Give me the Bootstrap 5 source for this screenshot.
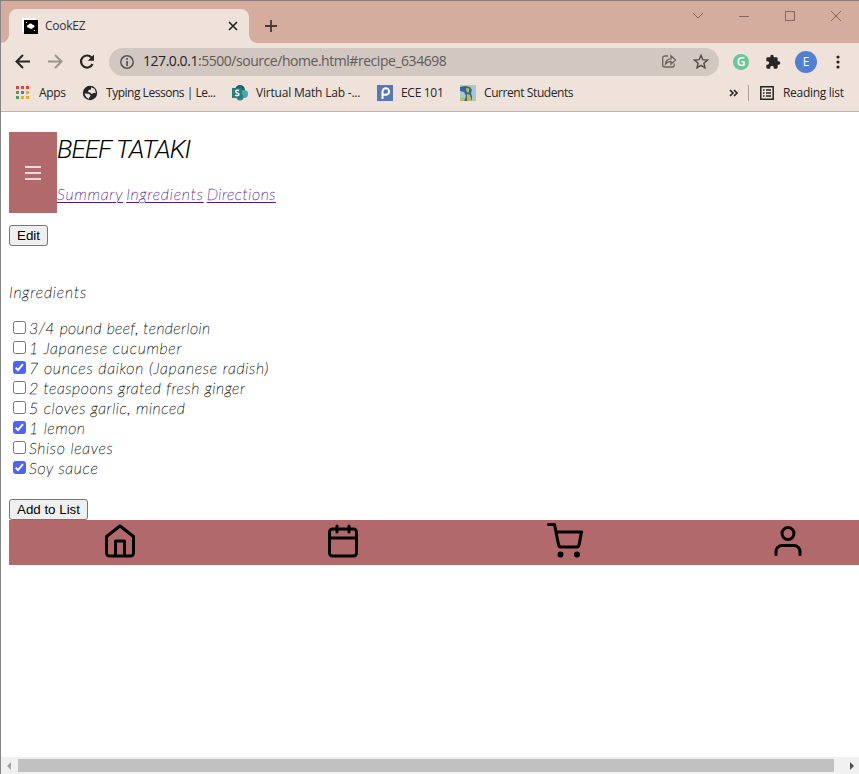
<!DOCTYPE html>
<html lang="en">
<head>
<meta charset="utf-8">
<title>CookEZ</title>
<link href="https://cdn.jsdelivr.net/npm/bootstrap@5.3.0/dist/css/bootstrap.min.css" rel="stylesheet">
<style>
body{width:859px;height:774px;overflow:hidden;background:#fff;color:#000;font-family:"Open Sans","Noto Sans",sans-serif}
svg{display:block;flex:none}
.window{height:774px;border-left:1px solid #858585;border-top:1px solid #8f7c76}
.tabs{height:42px;background:#d4ad9f;padding:8px 0 0 0}
.tab{width:240px;height:34px;margin-left:8px;background:#efe2da;border-radius:8px 8px 0 0;position:relative;padding:0 11px 0 13px;font-size:12px;color:#333}
.tab::before,.tab::after{content:"";position:absolute;bottom:0;width:8px;height:8px}
.tab::before{left:-8px;background:radial-gradient(circle at 0 0,transparent 7.5px,#efe2da 8px)}
.tab::after{right:-8px;background:radial-gradient(circle at 100% 0,transparent 7.5px,#efe2da 8px)}
.tab-title{letter-spacing:-.25px;margin-left:7px}
.controls{gap:34px;margin:0 17px 20px auto}
.toolbar{height:37px;background:#efe2da;padding:0 14px 0 14px}
.address{height:28px;width:610px;border-radius:14px;background:#d2c7c1;padding:0 10px 0 11px;margin-left:14px;font-size:14px;color:#615b58}
.url{margin:-2px 0 0 9px;letter-spacing:-.46px;white-space:nowrap}
.url b{font-weight:400;color:#252525}
.avatar{width:22px;height:22px;background:#527fd0;color:#fff;font-size:12px}
.gram{width:16px;height:16px;background:#6cc59b;color:#fff;font-size:12px;font-weight:600}
.marks{height:32px;background:#efe2da;border-bottom:1px solid #beb5af;font-size:12px;color:#252525;padding:0 14px 5px 15px;white-space:nowrap}
.marks span{display:block;flex:none}
.bm-a{width:27px;margin-left:9px;letter-spacing:-.3px}.ic-b{margin-left:16px}
.bm-b{width:110px;margin-left:8px;letter-spacing:-.48px}.ic-c{margin-left:16px}
.bm-c{width:105px;margin-left:8px;letter-spacing:-.2px}.ic-d{margin-left:16px}
.bm-d{width:43px;margin-left:8px;letter-spacing:-.3px}.ic-e{margin-left:16px}
.bm-e{width:91px;margin-left:8px;letter-spacing:-.42px}
.divider{width:1px;height:16px;background:#aaa19b;margin-left:9px}.ic-f{margin-left:11px}
.bm-f{width:62px;margin-left:9px;letter-spacing:-.3px}
.site{overflow:hidden;height:645px;padding:20px 0 0 8px}
.thin{font-family:Lato,Roboto,sans-serif;font-style:italic;font-weight:100;color:#000;-webkit-text-stroke:.3px currentColor}
.menu-box{width:48px;height:81px;background:#b2696b}
.recipe-title{font-family:Roboto,sans-serif;font-weight:300;font-style:italic;font-size:26px;line-height:34px;letter-spacing:-1.05px;margin:0 0 16px}
.links{font-size:16px;line-height:24px;gap:3px;letter-spacing:.8px}
.links a{color:#551a8b;text-decoration:underline;text-decoration-thickness:1px;text-underline-offset:2px}
.links a:last-child{letter-spacing:.5px}
.push{font-family:"Liberation Sans",Arial,sans-serif;font-size:13.33px;line-height:15px;height:21px;border:1px solid #767676;border-radius:3px;background:#efefef;padding:2px 7px;color:#000;white-space:nowrap}
.section-name{font-size:16px;line-height:20px;letter-spacing:.85px;margin:36px 0 16px}
.items{font-size:16px;line-height:20px;letter-spacing:.55px}
.items label{height:20px;gap:3px}
.items label:nth-child(1){letter-spacing:.38px}
.items label:nth-child(2),.items label:nth-child(3){letter-spacing:.72px}
.items label:nth-child(7),.items label:nth-child(8){letter-spacing:.66px}
.items input{appearance:none;width:13px;height:13px;margin:0 0 2px 4px;border:1px solid #767676;border-radius:2.5px;background:#fff;flex:none}
.items input:checked{border-color:#4d63f5;background:#4d63f5 url("data:image/svg+xml,%3Csvg xmlns='http://www.w3.org/2000/svg' viewBox='0 0 11 11'%3E%3Cpath d='M1.7 5.8l2.3 2.3 5-6' fill='none' stroke='white' stroke-width='2'/%3E%3C/svg%3E")}
.add-row{margin-top:21px}
.bottom-nav{width:890px;height:45px;background:#b2696b;padding-top:3px}
.bottom-nav svg{fill:none;stroke:#000;stroke-width:2;stroke-linecap:round;stroke-linejoin:round}
.scroller{height:17px;background:#f1f1f1;padding:0 5px 0 6px}
.thumb{height:13px;width:816px;background:#c1c1c1;margin-left:7px}
</style>
<script src="https://cdn.jsdelivr.net/npm/bootstrap@5.3.0/dist/js/bootstrap.bundle.min.js"></script>
</head>
<body>
<div class="window d-flex flex-column">
  <div class="tabs d-flex align-items-center">
    <div class="tab d-flex align-items-center">
      <svg width="16" height="16" viewBox="0 0 16 16"><path fill="#fff" d="M0 0h13v14H0z"/><path d="M2 2h14v14H2z"/><path fill="#fff" d="M5.500 9.500a1.600 1.600 0 0 1 1-2.700 2.200 2.200 0 0 1 4 0 1.600 1.600 0 0 1 1.500 2.700l-1.500.3v.9h-3v-.9zM4 4h1v1H4zM12 12h1v1h-1z"/></svg>
      <span class="tab-title">CookEZ</span>
      <svg class="ms-auto" width="10" height="10" viewBox="0 0 10 10" stroke="#252525" stroke-width="1.700"><path d="M1 1l8 8M9 1L1 9"/></svg>
    </div>
    <svg class="ms-3" width="12" height="12" viewBox="0 0 12 12" stroke="#443936" stroke-width="1.800"><path d="M6 0v12M0 6h12"/></svg>
    <div class="controls d-flex align-items-center">
      <svg width="12" height="12" viewBox="0 0 12 12" fill="none" stroke="#82665d"><path d="M1 3l5 5 5-5"/></svg>
      <svg width="12" height="12" viewBox="0 0 12 12" stroke="#82665d"><path d="M1 6.500h10"/></svg>
      <svg width="12" height="12" viewBox="0 0 12 12" fill="none" stroke="#82665d"><path d="M1.500 1.500h9v9h-9z"/></svg>
      <svg width="12" height="12" viewBox="0 0 12 12" stroke="#82665d"><path d="M1 1l10 10M11 1L1 11"/></svg>
    </div>
  </div>
  <div class="toolbar d-flex align-items-center">
    <svg width="16" height="16" viewBox="0 0 16 16" fill="none" stroke="#252525" stroke-width="2"><path d="M15 7.500H2M8 1L1.500 7.500 8 14"/></svg>
    <svg class="ms-3" width="16" height="16" viewBox="0 0 16 16" fill="none" stroke="#9d9590" stroke-width="2"><path d="M1 7.500h13M8 1l6.500 6.500L8 14"/></svg>
    <svg class="ms-3" width="16" height="16" viewBox="0 0 16 16"><path fill="none" stroke="#252525" stroke-width="2.200" d="M13.500 10A6 6 0 1 1 12.500 3.500"/><path fill="#252525" d="M15 .5v6.200H8.800z"/></svg>
    <div class="address d-flex align-items-center">
      <svg width="14" height="14" viewBox="0 0 14 14"><circle cx="7" cy="7" r="6.200" fill="none" stroke="#555" stroke-width="1.500"/><path fill="#555" d="M6.200 3h1.700v1.700H6.200zM6.200 6h1.700v5H6.200z"/></svg>
      <span class="url"><b>127.0.0.1</b>:5500/source/home.html#recipe_634698</span>
      <svg class="ms-auto" width="16" height="16" viewBox="0 0 16 16" fill="none" stroke="#6a6461" stroke-width="1.300"><path d="M7 2H4Q1.700 2 1.700 4v7q0 2 2 2h7.500q2 0 2-2V9.500M4.500 10Q4.700 5 10 4.800V1.700l4.500 4.300-4.500 4.200V7.500Q6.500 7.300 4.500 10z"/></svg>
      <svg class="ms-3" width="16" height="16" viewBox="0 0 16 16" fill="none" stroke="#514c4a" stroke-width="1.400"><path d="M8 1.300l1.800 4.400 4.700.4-3.600 3.100 1.100 4.600-4-2.500-4 2.500 1.100-4.600-3.600-3.100 4.700-.4z"/></svg>
    </div>
    <span class="gram rounded-circle d-flex align-items-center justify-content-center ms-auto">G</span>
    <svg class="ms-3" width="16" height="16" viewBox="0 0 24 24" fill="#252525"><path d="M20.500 11H19V7a2 2 0 0 0-2-2h-4V3.500a2.500 2.500 0 0 0-5 0V5H4a2 2 0 0 0-2 2v3.800h1.500a2.700 2.700 0 0 1 0 5.400H2V20a2 2 0 0 0 2 2h3.800v-1.500a2.700 2.700 0 0 1 5.400 0V22H17a2 2 0 0 0 2-2v-4h1.500a2.500 2.500 0 0 0 0-5z"/></svg>
    <span class="avatar rounded-circle d-flex align-items-center justify-content-center ms-auto">E</span>
    <svg class="ms-auto" width="14" height="14" viewBox="0 0 14 14" fill="#252525"><circle cx="7" cy="2" r="1.600"/><circle cx="7" cy="7" r="1.600"/><circle cx="7" cy="12" r="1.600"/></svg>
  </div>
  <div class="marks d-flex align-items-center">
    <svg width="14" height="14" viewBox="0 0 14 14"><path fill="#d5443b" d="M0 0h3v3H0zM5 0h3v3H5zM10 0h3v3h-3z"/><path fill="#559b55" d="M0 5h3v3H0zM0 10h3v3H0z"/><path fill="#4f78dc" d="M5 5h3v3H5z"/><path fill="#e2ad38" d="M10 5h3v3h-3zM5 10h3v3H5zM10 10h3v3h-3z"/></svg>
    <span class="bm-a">Apps</span>
    <svg class="ic-b" width="16" height="16" viewBox="0 0 16 16"><circle cx="8" cy="8" r="7.200" fill="#252525"/><path fill="#efe2da" d="M2.500 8.500l4 .3 2 1.200-.5 2-1 .5v1.500Q3.500 12.500 2.500 8.500zM9 2.300l3.500 1.500 1.500 4-2.500.2L9.500 9 8 7.500 6 7l.5-2L9 4.500z"/></svg>
    <span class="bm-b">Typing Lessons | Le...</span>
    <svg class="ic-c" width="16" height="16" viewBox="0 0 16 16"><circle cx="8" cy="5" r="5" fill="#1b686c"/><circle cx="12" cy="9" r="4" fill="#4da6a7"/><circle cx="8" cy="12" r="3.500" fill="#2d8587"/><path fill="#287b7d" d="M0 3h10v10H0z"/><path fill="none" stroke="#fff" stroke-width="1.400" d="M7 5.500C4.500 4.500 3 6 4 7.200s3 .6 3 2-2 2-4 1"/></svg>
    <span class="bm-c">Virtual Math Lab -...</span>
    <svg class="ic-d" width="16" height="16" viewBox="0 0 16 16"><path fill="#5878b2" d="M0 0h16v16H0z"/><path fill="none" stroke="#fff" stroke-width="2" d="M5.500 14V6.500a3.300 3.300 0 1 1 3.300 3.300H6"/></svg>
    <span class="bm-d">ECE 101</span>
    <svg class="ic-e" width="16" height="16" viewBox="0 0 16 16"><path fill="#a7c8cc" d="M0 0h16v16H0z"/><path fill="#36678d" d="M0 2l5-1 5 1 2 3-1 3 1 3v5H4l2-5-2-4-4-1z"/><path fill="#c9b84c" d="M6 3l3 .5L9 7l-2 .5zM7 9l3 1 2 6H7zM1 13l5-1-2 4H0z"/></svg>
    <span class="bm-e">Current Students</span>
    <svg class="ms-auto" width="10" height="8" viewBox="0 0 10 8" fill="none" stroke="#252525" stroke-width="1.600"><path d="M1 1l3 3-3 3M5 1l3 3-3 3"/></svg>
    <span class="divider"></span>
    <svg class="ic-f" width="14" height="14" viewBox="0 0 14 14" fill="none" stroke="#252525" stroke-width="1.500"><path d="M.8.8h12.400v12.400H.8zM3 4h1.500M6 4h5M3 7h1.500M6 7h5M3 10h1.500M6 10h5"/></svg>
    <span class="bm-f">Reading list</span>
  </div>
  <main class="site">
    <div class="d-flex">
      <div class="menu-box d-flex align-items-center justify-content-center"><svg width="16" height="16" viewBox="0 0 16 16" fill="#fff"><path d="M0 1.200h16v1.600H0zM0 7.200h16v1.600H0zM0 13.200h16v1.600H0z"/></svg></div>
      <div>
        <h1 class="recipe-title">BEEF TATAKI</h1>
        <div class="links thin d-flex"><a href="#summary">Summary</a><a href="#ingredients">Ingredients</a><a href="#directions">Directions</a></div>
      </div>
    </div>
    <div class="d-flex pt-2 mt-1"><button class="push" type="button">Edit</button></div>
    <h2 class="section-name thin">Ingredients</h2>
    <div class="items thin d-flex flex-column">
      <label class="d-flex align-items-center"><input type="checkbox"><span>3/4 pound beef, tenderloin</span></label>
      <label class="d-flex align-items-center"><input type="checkbox"><span>1 Japanese cucumber</span></label>
      <label class="d-flex align-items-center"><input type="checkbox" checked><span>7 ounces daikon (Japanese radish)</span></label>
      <label class="d-flex align-items-center"><input type="checkbox"><span>2 teaspoons grated fresh ginger</span></label>
      <label class="d-flex align-items-center"><input type="checkbox"><span>5 cloves garlic, minced</span></label>
      <label class="d-flex align-items-center"><input type="checkbox" checked><span>1 lemon</span></label>
      <label class="d-flex align-items-center"><input type="checkbox"><span>Shiso leaves</span></label>
      <label class="d-flex align-items-center"><input type="checkbox" checked><span>Soy sauce</span></label>
    </div>
    <div class="add-row d-flex"><button class="push" type="button">Add to List</button></div>
    <nav class="bottom-nav d-flex">
      <div class="flex-fill d-flex justify-content-center"><svg width="36" height="36" viewBox="0 0 24 24"><path d="M3 9l9-7 9 7v11a2 2 0 0 1-2 2H5a2 2 0 0 1-2-2zM9 22V12h6v10"/></svg></div>
      <div class="flex-fill d-flex justify-content-center"><svg width="36" height="36" viewBox="0 0 24 24"><rect x="3" y="4" width="18" height="18" rx="2"/><path d="M16 2v4M8 2v4M3 10h18"/></svg></div>
      <div class="flex-fill d-flex justify-content-center"><svg width="36" height="36" viewBox="0 0 24 24"><circle cx="9" cy="21" r="1"/><circle cx="20" cy="21" r="1"/><path d="M1 1h4l2.680 13.390a2 2 0 0 0 2 1.610h9.720a2 2 0 0 0 2-1.610L23 6H6"/></svg></div>
      <div class="flex-fill d-flex justify-content-center"><svg width="36" height="36" viewBox="0 0 24 24"><path d="M20 21v-2a4 4 0 0 0-4-4H8a4 4 0 0 0-4 4v2"/><circle cx="12" cy="7" r="4"/></svg></div>
    </nav>
  </main>
  <div class="scroller d-flex align-items-center">
    <svg width="4" height="8" viewBox="0 0 4 8"><path fill="#a3a3a3" d="M4 0v8L0 4z"/></svg>
    <div class="thumb"></div>
    <svg class="ms-auto" width="4" height="8" viewBox="0 0 4 8"><path fill="#505050" d="M0 0v8l4-4z"/></svg>
  </div>
</div>
</body>
</html>
